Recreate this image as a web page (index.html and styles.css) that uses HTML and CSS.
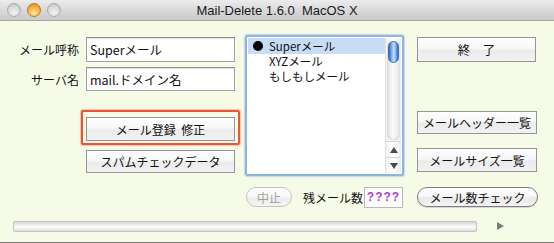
FILE: index.html
```html
<!DOCTYPE html>
<html lang="ja">
<head>
<meta charset="utf-8">
<title>Mail-Delete</title>
<link rel="stylesheet" href="styles.css">
</head>
<body>
<div class="window">
  <div class="titlebar">
    <div class="lights">
      <span class="light gray"></span>
      <span class="light orange"></span>
      <span class="light gray"></span>
    </div>
    <div class="title">Mail-Delete 1.6.0&nbsp;&nbsp;MacOS X</div>
    <div class="spacer"></div>
  </div>

  <div class="main">
    <div class="col-left">
      <div class="field">
        <span class="label">メール呼称</span>
        <div class="input">Superメール</div>
      </div>
      <div class="field second">
        <span class="label">サーバ名</span>
        <div class="input">mail.ドメイン名</div>
      </div>
      <div class="focus-frame">
        <button class="btn">メール登録&nbsp;&nbsp;修正</button>
      </div>
      <button class="btn spam">スパムチェックデータ</button>
    </div>

    <div class="listbox">
      <div class="items">
        <div class="item selected"><span class="dot"></span>Superメール</div>
        <div class="item"><span class="nodot"></span>XYZメール</div>
        <div class="item"><span class="nodot"></span>もしもしメール</div>
      </div>
      <div class="scrollbar">
        <div class="track"><div class="thumb"></div></div>
        <div class="arrow up"><span></span></div>
        <div class="arrow down"><span></span></div>
      </div>
    </div>

    <div class="col-right">
      <button class="btn quit">終　了</button>
      <button class="btn header">メールヘッダー一覧</button>
      <button class="btn size">メールサイズ一覧</button>
    </div>
  </div>

  <div class="bottom-row">
    <button class="pill stop">中止</button>
    <span class="remain-label">残メール数</span>
    <div class="count">????</div>
    <button class="pill check">メール数チェック</button>
  </div>

  <div class="progress-row">
    <div class="progress"></div>
    <div class="play"></div>
  </div>
</div>
</body>
</html>
```

FILE: styles.css
```css
html, body {
  margin: 0;
  padding: 0;
  background: #f5fae6;
}

.window {
  width: 554px;
  height: 243px;
  box-sizing: border-box;
  background: #f6fbe8;
  border-bottom: 1px solid #7a7a7a;
  font-family: "Noto Sans CJK JP", "Liberation Sans", sans-serif;
  font-size: 12px;
  color: #111;
  overflow: hidden;
}

/* ---------- title bar ---------- */
.titlebar {
  height: 21px;
  box-sizing: border-box;
  display: grid;
  grid-template-columns: 1fr auto 1fr;
  align-items: center;
  background: linear-gradient(#ececec, #d6d6d6 60%, #cbcbcb);
  border-bottom: 1px solid #a6a6a6;
}

.lights {
  display: flex;
  gap: 6px;
  padding-left: 7px;
  align-items: center;
}

.light {
  width: 14px;
  height: 14px;
  box-sizing: border-box;
  border-radius: 50%;
}

.light.gray {
  border: 1px solid #ababab;
  background: radial-gradient(circle at 50% 70%, #f2f2f2 0%, #d9d9d9 55%, #bdbdbd 100%);
}

.light.orange {
  border: 1px solid #b97a2a;
  background: radial-gradient(circle at 50% 75%, #ffe9a0 0%, #f6b54a 50%, #d98220 100%);
}

.title {
  font-family: "Liberation Sans", sans-serif;
  font-size: 13px;
  color: #1a1a1a;
  white-space: nowrap;
  padding-top: 1px;
}

/* ---------- main area ---------- */
.main {
  height: 165px;
  display: grid;
  grid-template-columns: 245px 159px 133px;
  align-items: start;
}

.col-left {
  display: flex;
  flex-direction: column;
  align-items: flex-start;
  padding-top: 16px;
}

.field {
  display: flex;
  align-items: center;
  height: 25px;
}

.field.second {
  margin-top: 5px;
  height: 24px;
}

.label {
  width: 79px;
  text-align: right;
  margin-right: 7px;
  white-space: nowrap;
}

.input {
  width: 149px;
  height: 100%;
  box-sizing: border-box;
  background: #fff;
  border: 1px solid #a3a3a3;
  border-top-color: #8c8c8c;
  box-shadow: inset 0 1px 1px rgba(0, 0, 0, 0.12);
  padding-left: 3px;
  font-size: 12.5px;
  line-height: 23px;
  white-space: nowrap;
}

.btn {
  display: flex;
  align-items: center;
  justify-content: center;
  box-sizing: border-box;
  padding: 0;
  margin: 0;
  font-family: inherit;
  font-size: 12px;
  color: #111;
  border: 1px solid #959595;
  background: linear-gradient(#ffffff, #f7f7f7 45%, #ebebeb 55%, #f2f2f2);
  white-space: nowrap;
}

.focus-frame {
  margin-top: 19px;
  margin-left: 81px;
  width: 159px;
  height: 35px;
  box-sizing: border-box;
  border: 2px solid #e8563a;
  border-radius: 2px;
  box-shadow: 0 0 1px 1px rgba(232, 86, 58, 0.35);
  padding: 5px 0 0 3px;
}

.focus-frame .btn {
  width: 149px;
  height: 24px;
}

.btn.spam {
  margin-top: 5px;
  margin-left: 86px;
  width: 149px;
  height: 23px;
}

/* ---------- list ---------- */
.listbox {
  margin-top: 14px;
  height: 141px;
  box-sizing: border-box;
  border: 2px solid #8fb4e2;
  border-radius: 3px;
  box-shadow: 0 0 1px 1px rgba(130, 170, 225, 0.45);
  background: #fff;
  display: flex;
  padding: 1px;
}

.items {
  flex: 1;
  min-width: 0;
}

.item {
  height: 15px;
  display: flex;
  align-items: center;
  line-height: 15px;
  font-size: 11.5px;
  white-space: nowrap;
}

.item.selected {
  height: 16px;
  background: #c8dcf6;
}

.item + .item {
  margin-top: 0;
}

.dot, .nodot {
  width: 10px;
  height: 10px;
  border-radius: 50%;
  margin-left: 5px;
  margin-right: 6px;
  flex: none;
}

.dot {
  background: #000;
}

.scrollbar {
  width: 15px;
  flex: none;
  display: flex;
  flex-direction: column;
  border-left: 1px solid #e2e2e2;
  background: linear-gradient(90deg, #f3f3f3, #ffffff 50%, #ececec);
}

.track {
  flex: 1;
  margin: 1px 1px 0;
  border-radius: 7px;
  background: linear-gradient(90deg, #e0e0e0, #fbfbfb 45%, #e6e6e6);
  box-shadow: inset 0 -2px 3px rgba(0, 0, 0, 0.08);
  padding-top: 2px;
}

.thumb {
  width: 11px;
  height: 22px;
  margin: 0 auto;
  border-radius: 6px;
  border: 1px solid #3d6eb8;
  box-sizing: border-box;
  background: linear-gradient(90deg, #2c63b8, #8dc0f2 35%, #c4e2fb 55%, #5f97dc 85%, #2f68bb);
}

.arrow {
  height: 15px;
  display: flex;
  align-items: center;
  justify-content: center;
  border-top: 1px solid #d4d4d4;
}

.arrow span {
  width: 0;
  height: 0;
  border-left: 4px solid transparent;
  border-right: 4px solid transparent;
}

.arrow.up span {
  border-bottom: 6px solid #4a4a4a;
}

.arrow.down span {
  border-top: 6px solid #4a4a4a;
}

/* ---------- right column ---------- */
.col-right {
  display: flex;
  flex-direction: column;
  align-items: flex-start;
  padding-top: 16px;
  padding-left: 13px;
}

.btn.quit {
  width: 119px;
  height: 25px;
  font-size: 12.5px;
}

.btn.header {
  margin-top: 49px;
  width: 120px;
  height: 23px;
}

.btn.size {
  margin-top: 14px;
  width: 120px;
  height: 24px;
}

/* ---------- bottom row ---------- */
.bottom-row {
  height: 22px;
  display: flex;
  align-items: center;
  padding-left: 246px;
}

.pill {
  box-sizing: border-box;
  height: 20px;
  border-radius: 10px;
  padding: 0;
  margin: 0;
  font-family: inherit;
  font-size: 12px;
  display: flex;
  align-items: center;
  justify-content: center;
  white-space: nowrap;
}

.pill.stop {
  width: 46px;
  color: #a0a0a0;
  border: 1px solid #c4c4c4;
  background: linear-gradient(#ffffff, #f7f7f7 50%, #ededed 55%, #f5f5f5);
}

.remain-label {
  margin-left: 11px;
  width: 61px;
  white-space: nowrap;
}

.count {
  width: 39px;
  height: 21px;
  box-sizing: border-box;
  background: #fff;
  border: 1px solid #b9b9b9;
  color: #b43ccc;
  font-weight: bold;
  font-family: "Liberation Sans", sans-serif;
  font-size: 12px;
  letter-spacing: 1px;
  display: flex;
  align-items: center;
  justify-content: center;
}

.pill.check {
  margin-left: 14px;
  width: 121px;
  color: #111;
  border: 1px solid #7d7d7d;
  background: linear-gradient(#ffffff, #f8f8f8 45%, #e9e9e9 55%, #f4f4f4);
  box-shadow: 0 1px 1px rgba(0, 0, 0, 0.15);
}

/* ---------- progress ---------- */
.progress-row {
  margin-top: 12px;
  height: 12px;
  display: flex;
  align-items: center;
  padding-left: 13px;
}

.progress {
  width: 464px;
  height: 11px;
  box-sizing: border-box;
  border: 1px solid #c2c2c2;
  border-radius: 2px;
  background: linear-gradient(#d6d6d6, #f4f4f4 40%, #fbfbfb 60%, #dcdcdc);
}

.play {
  margin-left: 20px;
  width: 0;
  height: 0;
  border-top: 4px solid transparent;
  border-bottom: 4px solid transparent;
  border-left: 7px solid #7b7b7b;
}
```
